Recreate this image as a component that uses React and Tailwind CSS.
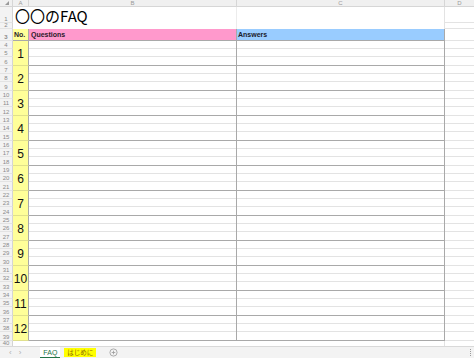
import React from "react";

const GRID = "border-[#e3e3e3]";

function RowLabel({ h, n }) {
  return (
    <div
      className={`${h} w-[13px] shrink-0 bg-[#f3f3f3] border-r border-b border-r-[#d4d4d4] border-b-[#e3e3e3] flex items-end justify-center text-[6px] leading-[6px] text-[#8a8a8a]`}
    >
      <span>{n}</span>
    </div>
  );
}

function ItemBlock({ num, start }) {
  const hs = ["h-[8px]", "h-[8px]", "h-[9px]"];
  return (
    <div className="flex h-[25px]">
      <div className="flex flex-col w-[13px] shrink-0">
        {hs.map((h, i) => (
          <RowLabel key={i} h={h} n={start + i} />
        ))}
      </div>
      <div className="w-[16px] shrink-0 bg-[#ffff99] border-r border-b border-r-[#a9a9a9] border-b-[#e0e08c] flex items-center justify-center text-[12px] leading-none text-[#111] pt-[1px]">
        {num}
      </div>
      <div className="w-[208px] shrink-0 flex flex-col border-r border-[#a9a9a9]">
        <div className={`h-[8px] border-b ${GRID}`} />
        <div className={`h-[8px] border-b ${GRID}`} />
        <div className="h-[9px] border-b border-[#a9a9a9]" />
      </div>
      <div className="w-[208px] shrink-0 flex flex-col border-r border-[#a9a9a9]">
        <div className={`h-[8px] border-b ${GRID}`} />
        <div className={`h-[8px] border-b ${GRID}`} />
        <div className="h-[9px] border-b border-[#a9a9a9]" />
      </div>
      <div className="flex-1 flex flex-col">
        <div className={`h-[8px] border-b ${GRID}`} />
        <div className={`h-[8px] border-b ${GRID}`} />
        <div className={`h-[9px] border-b ${GRID}`} />
      </div>
    </div>
  );
}

export default function App() {
  const items = Array.from({ length: 12 }, (_, i) => i + 1);
  return (
    <div
      className="w-[474px] h-[358px] bg-white overflow-hidden flex flex-col"
      style={{ fontFamily: '"Liberation Sans", "Noto Sans CJK JP", sans-serif' }}
    >
      {/* column header */}
      <div className="flex h-[7px] bg-[#f0f0f0] border-b border-[#d6d6d6] text-[6px] leading-[6px] text-[#9a9a9a]">
        <div className="w-[13px] shrink-0 border-r border-[#d6d6d6] relative">
          <svg width="6" height="6" viewBox="0 0 6 6" className="absolute left-[4px] top-[0px]">
            <path d="M5 1 L5 5 L1 5 Z" fill="#9a9a9a" />
          </svg>
        </div>
        <div className="w-[16px] shrink-0 border-r border-[#d6d6d6] flex items-center justify-center">A</div>
        <div className="w-[208px] shrink-0 border-r border-[#d6d6d6] flex items-center justify-center">B</div>
        <div className="w-[208px] shrink-0 border-r border-[#d6d6d6] flex items-center justify-center">C</div>
        <div className="flex-1 flex items-center justify-center">D</div>
      </div>

      {/* row 1 title */}
      <div className="flex h-[16px]">
        <RowLabel h="h-[16px]" n={1} />
        <div className="w-[224px] shrink-0 border-r border-[#ececec] flex items-end pl-[2px]">
          <span
            className="text-[15px] leading-[15px] text-black whitespace-nowrap"
            style={{ fontFamily: '"Noto Sans CJK JP", sans-serif' }}
          >
            〇〇のFAQ
          </span>
        </div>
        <div className="w-[208px] shrink-0 border-r border-[#e3e3e3]" />
        <div className={`flex-1 border-b ${GRID}`} />
      </div>

      {/* row 2 */}
      <div className="flex h-[6px]">
        <RowLabel h="h-[6px]" n={2} />
        <div className="w-[16px] shrink-0" />
        <div className="w-[208px] shrink-0 border-r border-[#ececec]" />
        <div className="w-[208px] shrink-0 border-r border-[#e3e3e3]" />
        <div className={`flex-1 border-b ${GRID}`} />
      </div>

      {/* row 3 header */}
      <div className="flex h-[12px] text-[7px] leading-none font-bold text-[#2a1a2a]">
        <RowLabel h="h-[12px]" n={3} />
        <div className="w-[16px] shrink-0 bg-[#ffff99] border-r border-b border-[#a9a9a9] flex items-center pl-[1px]">
          No.
        </div>
        <div className="w-[208px] shrink-0 bg-[#ff99cc] border-r border-b border-[#a9a9a9] flex items-center pl-[2px]">
          Questions
        </div>
        <div className="w-[208px] shrink-0 bg-[#99ccff] border-r border-b border-[#a9a9a9] flex items-center pl-[1px] text-[#1a1a2a]">
          Answers
        </div>
        <div className={`flex-1 border-b ${GRID}`} />
      </div>

      {items.map((n) => (
        <ItemBlock key={n} num={n} start={4 + (n - 1) * 3} />
      ))}

      {/* row 40 partial */}
      <div className="flex h-[5px] overflow-hidden">
        <RowLabel h="h-[6px]" n={40} />
        <div className="w-[16px] shrink-0" />
        <div className="w-[208px] shrink-0" />
        <div className="w-[208px] shrink-0 border-r border-[#e3e3e3]" />
        <div className="flex-1" />
      </div>

      {/* tab bar */}
      <div className="flex-1 bg-[#f3f3f3] border-t border-[#d9d9d9] flex items-center text-[7px] leading-none relative">
        <span className="ml-[9px] text-[#b0b0b0] text-[8px]">‹</span>
        <span className="ml-[7px] text-[#b0b0b0] text-[8px]">›</span>
        <div className="ml-[19px] h-full w-[20px] flex items-center justify-center text-[#217346] border-b border-[#217346] bg-white">
          FAQ
        </div>
        <div
          className="ml-[4px] h-[9px] px-[3px] bg-[#ffff00] flex items-center text-[#8a6a00] text-[6.5px]"
          style={{ fontFamily: '"Noto Sans CJK JP", sans-serif' }}
        >
          はじめに
        </div>
        <svg width="9" height="9" viewBox="0 0 9 9" className="ml-[13px]">
          <circle cx="4.5" cy="4.5" r="3.6" fill="none" stroke="#9a9a9a" strokeWidth="0.8" />
          <path d="M4.5 2.7 V6.3 M2.7 4.5 H6.3" stroke="#9a9a9a" strokeWidth="0.8" />
        </svg>
        <div className="absolute right-[3px] top-[2px] flex flex-col gap-[1px]">
          <div className="w-[1px] h-[1px] bg-[#9a9a9a]" />
          <div className="w-[1px] h-[1px] bg-[#9a9a9a]" />
          <div className="w-[1px] h-[1px] bg-[#9a9a9a]" />
          <div className="w-[1px] h-[1px] bg-[#9a9a9a]" />
        </div>
      </div>
    </div>
  );
}
